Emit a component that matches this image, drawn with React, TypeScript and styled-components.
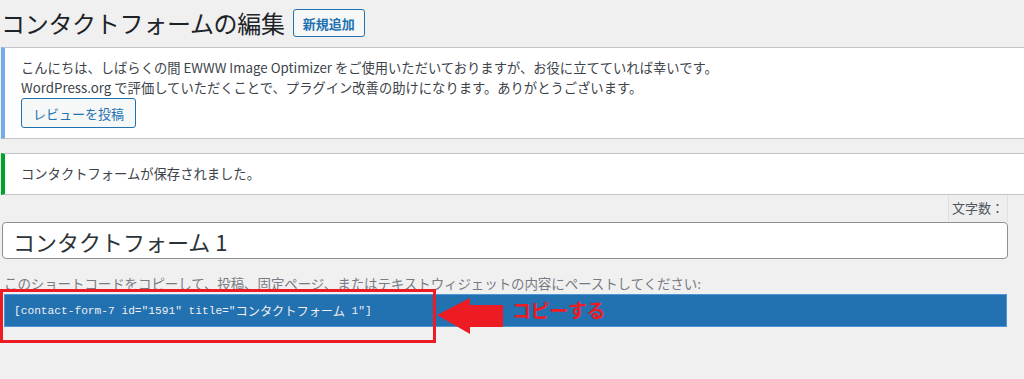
import React from 'react';
import styled, { createGlobalStyle } from 'styled-components';

const GlobalStyle = createGlobalStyle`
  html, body {
    margin: 0;
    padding: 0;
    background: #f0f0f1;
  }
  body {
    font-family: "Noto Sans", "Noto Sans CJK JP", sans-serif;
    color: #3c434a;
  }
`;

const Page = styled.div`
  width: 1024px;
  height: 379px;
  overflow: hidden;
  background: #f0f0f1;
`;

const Header = styled.div`
  display: flex;
  align-items: center;
  gap: 8px;
  height: 28px;
  padding: 9px 0 0 1px;
`;

const Title = styled.h1`
  margin: 0;
  font-family: "Noto Sans CJK JP", sans-serif;
  font-size: 24px;
  font-weight: 400;
  line-height: 28px;
  color: #1d2327;
  letter-spacing: -0.3px;
`;

const Button = styled.button<{ $strong?: boolean }>`
  box-sizing: border-box;
  height: ${(p) => (p.$strong ? '28px' : '30px')};
  padding: 0 ${(p) => (p.$strong ? '9px' : '11px')};
  border: 1px solid #2271b1;
  border-radius: 3px;
  background: #f6f7f7;
  color: #2271b1;
  font-family: "Noto Sans CJK JP", sans-serif;
  font-size: 13px;
  font-weight: ${(p) => (p.$strong ? 600 : 400)};
  line-height: 1;
  white-space: nowrap;
  cursor: pointer;
`;

const Notice = styled.div<{ $accent: string; $gap: number }>`
  margin: ${(p) => p.$gap}px -4px 0 1px;
  padding: 10px 12px 10px 16px;
  background: #fff;
  border-top: 1px solid #c3c4c7;
  border-bottom: 1px solid #c3c4c7;
  border-left: 4px solid ${(p) => p.$accent};
  font-family: "Noto Sans CJK JP", sans-serif;
  font-size: 13.3px;
  line-height: 20px;
  color: #3c434a;
`;

const NoticeLine = styled.p`
  margin: 0;
  white-space: nowrap;
`;

const CountRow = styled.div`
  display: flex;
  justify-content: flex-end;
  padding-right: 16px;
`;

const CountTab = styled.div`
  box-sizing: border-box;
  width: 60px;
  height: 27px;
  padding-top: 3px;
  text-align: center;
  background: #eeeeef;
  border-left: 1px solid #e0e0e1;
  border-right: 1px solid #e0e0e1;
  font-family: "Noto Sans CJK JP", sans-serif;
  font-size: 13px;
  color: #50575e;
`;

const TitleInput = styled.div`
  box-sizing: border-box;
  height: 37px;
  margin: 0 16px 0 2px;
  padding: 0 10px;
  display: flex;
  align-items: center;
  background: #fff;
  border: 1px solid #8c8f94;
  border-radius: 4px;
  font-family: "Noto Sans CJK JP", sans-serif;
  font-size: 22px;
  color: #2c3338;
`;

const Description = styled.p`
  margin: 14px 0 0 4px;
  font-family: "Noto Sans CJK JP", sans-serif;
  font-size: 13.5px;
  line-height: 20px;
  color: #787c82;
  white-space: nowrap;
  letter-spacing: -0.1px;
`;

const ShortcodeArea = styled.div`
  position: relative;
  margin: 1px 17px 0 4px;
`;

const ShortcodeBar = styled.div`
  box-sizing: border-box;
  height: 33px;
  padding: 0 9px;
  display: flex;
  align-items: center;
  background: #2271b1;
  border: 1px solid #4f94d4;
  font-family: "Liberation Mono", "Noto Sans CJK JP", monospace;
  font-size: 11.2px;
  color: #f0f0f1;
  white-space: pre;
`;

const Wide = styled.span`
  font-family: "Noto Sans CJK JP", sans-serif;
  font-size: 12.2px;
`;

const Highlight = styled.div`
  position: absolute;
  left: -4px;
  top: -5px;
  width: 430px;
  height: 48px;
  border: 3px solid #ed1c24;
  pointer-events: none;
`;

const Arrow = styled.svg`
  position: absolute;
  left: 431px;
  top: 2px;
`;

const Callout = styled.span`
  position: absolute;
  left: 508px;
  top: 3px;
  font-family: "Noto Sans CJK JP", sans-serif;
  font-size: 19px;
  font-weight: 700;
  color: #ed1c24;
  line-height: 26px;
  letter-spacing: -0.4px;
`;

export default function App() {
  return (
    <Page>
      <GlobalStyle />
      <Header>
        <Title>コンタクトフォームの編集</Title>
        <Button $strong>新規追加</Button>
      </Header>

      <Notice $accent="#72aee6" $gap={10}>
        <NoticeLine>
          こんにちは、しばらくの間 EWWW Image Optimizer をご使用いただいておりますが、お役に立てていれば幸いです。
        </NoticeLine>
        <NoticeLine>
          WordPress.org で評価していただくことで、プラグイン改善の助けになります。ありがとうございます。
        </NoticeLine>
        <Button>レビューを投稿</Button>
      </Notice>

      <Notice $accent="#00a32a" $gap={14}>
        <NoticeLine>コンタクトフォームが保存されました。</NoticeLine>
      </Notice>

      <CountRow>
        <CountTab>文字数：</CountTab>
      </CountRow>
      <TitleInput>コンタクトフォーム 1</TitleInput>

      <Description>
        このショートコードをコピーして、投稿、固定ページ、またはテキストウィジェットの内容にペーストしてください:
      </Description>

      <ShortcodeArea>
        <ShortcodeBar>
          [contact-form-7 id="1591" title="<Wide>コンタクトフォーム</Wide> 1"]
        </ShortcodeBar>
        <Highlight />
        <Arrow width="70" height="38" viewBox="0 0 70 38">
          <polygon points="2,19 35,2 35,9 68,9 68,31 35,31 35,38" fill="#ed1c24" />
        </Arrow>
        <Callout>コピーする</Callout>
      </ShortcodeArea>
    </Page>
  );
}
